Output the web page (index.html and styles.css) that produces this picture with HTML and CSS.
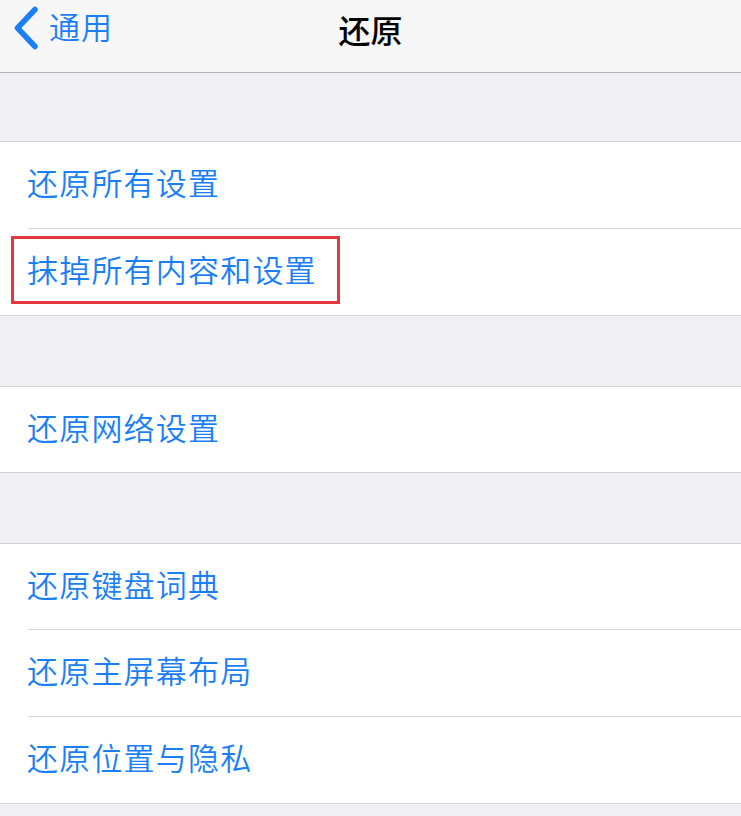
FILE: index.html
```html
<!DOCTYPE html>
<html lang="zh-CN">
<head>
<meta charset="utf-8">
<title>还原</title>
<link rel="stylesheet" href="styles.css">
</head>
<body>
<div class="screen">
  <header class="nav">
    <div class="back">
      <svg class="chev" viewBox="0 0 26 44" width="26" height="44" aria-hidden="true">
        <path d="M22 3.5 L4.5 22 L22 40.5" fill="none" stroke="#1a7ff5" stroke-width="5.5" stroke-linecap="round" stroke-linejoin="round"/>
      </svg>
      <span class="back-text">通用</span>
    </div>
    <div class="title">还原</div>
  </header>

  <div class="gap first"></div>

  <section class="group">
    <div class="row">还原所有设置</div>
    <div class="row marked">抹掉所有内容和设置<span class="mark"></span></div>
  </section>

  <div class="gap"></div>

  <section class="group">
    <div class="row short">还原网络设置</div>
  </section>

  <div class="gap"></div>

  <section class="group">
    <div class="row short">还原键盘词典</div>
    <div class="row">还原主屏幕布局</div>
    <div class="row">还原位置与隐私</div>
  </section>

  <div class="gap last"></div>
</div>
</body>
</html>
```

FILE: styles.css
```css
* { box-sizing: border-box; }

html, body {
  margin: 0;
  padding: 0;
  background: #efeff4;
}

body {
  font-family: "Noto Sans CJK SC", "Noto Sans", sans-serif;
}

.screen {
  width: 741px;
  height: 816px;
  overflow: hidden;
  display: flex;
  flex-direction: column;
}

.nav {
  position: relative;
  flex: none;
  height: 73px;
  background: #f7f7f8;
  border-bottom: 1px solid #b3b3b5;
  display: flex;
  align-items: center;
  justify-content: center;
}

.back {
  position: absolute;
  left: 13px;
  top: 6px;
  display: flex;
  align-items: center;
  height: 44px;
  gap: 10px;
}

.chev { display: block; }

.back-text {
  color: #1a7ff5;
  font-size: 31px;
  line-height: 44px;
  font-weight: 350;
  letter-spacing: 1px;
  margin-top: -4px;
}

.title {
  color: #000;
  font-size: 32px;
  font-weight: 500;
  line-height: 42px;
  margin-top: -14px;
}

.gap {
  flex: none;
  height: 70px;
  background: #efeff4;
}

.gap.first { height: 68px; }
.gap.last { flex: 1 1 auto; height: auto; }

.group {
  flex: none;
  background: #fff;
  border-top: 1px solid #d3d3d8;
  border-bottom: 1px solid #d3d3d8;
  display: flex;
  flex-direction: column;
}

.row {
  position: relative;
  height: 86px;
  display: flex;
  align-items: center;
  padding-left: 27px;
  padding-bottom: 7px;
  color: #1a7ff5;
  font-size: 31px;
  font-weight: 350;
  letter-spacing: 1.2px;
}

.row.short { height: 85px; }

.row + .row {
  height: 87px;
  border-top: 1px solid transparent;
}

.row + .row::before {
  content: "";
  position: absolute;
  left: 28px;
  right: 0;
  top: -1px;
  height: 1px;
  background: #d3d3d8;
}

.mark {
  position: absolute;
  left: 11px;
  top: 7px;
  width: 329px;
  height: 68px;
  border: 3px solid #e1393c;
}
```
